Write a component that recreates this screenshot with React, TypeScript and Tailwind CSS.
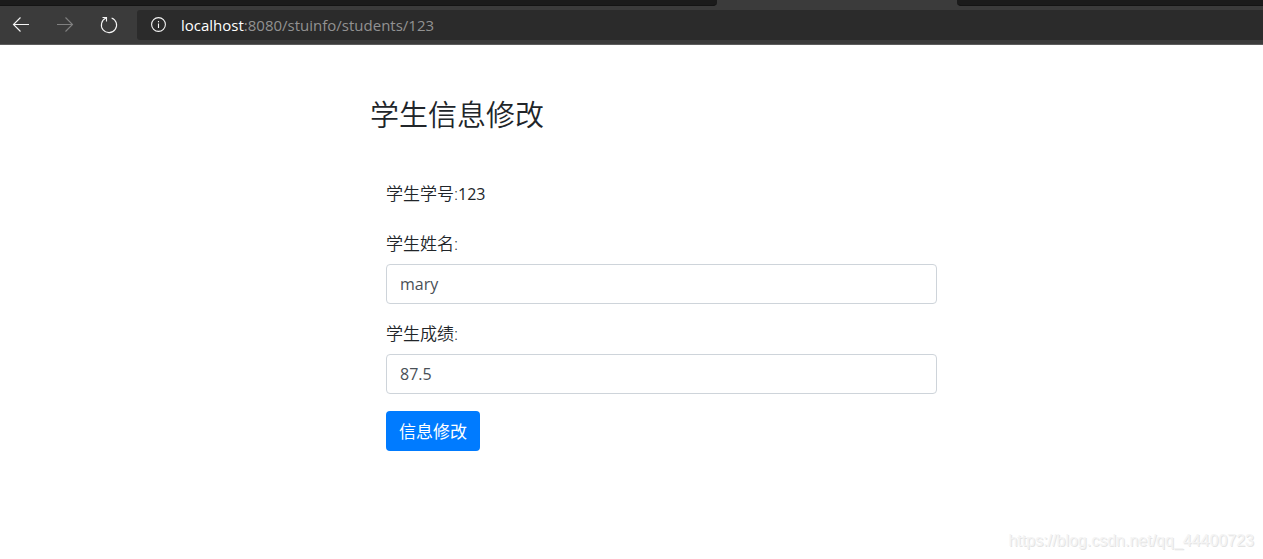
import { useState } from "react";

function BrowserBar() {
  return (
    <header className="bg-[#3b3b3b]">
      <div className="flex h-[6px]" aria-hidden="true">
        <div className="w-[717px] rounded-br-[4px] border-b border-[#141414] bg-[#1b1b1b]" />
        <div className="w-[240px]" />
        <div className="flex-1 rounded-bl-[4px] border-b border-[#141414] bg-[#1b1b1b]" />
      </div>
      <nav className="flex h-[39px] items-center border-b border-[#5c5c5c] pl-[10px]">
        <button type="button" aria-label="Back" className="flex size-[22px] items-center justify-center">
          <svg width="22" height="22" viewBox="0 0 22 22" fill="none" stroke="#f5f5f5" strokeWidth="1.1">
            <path d="M19 10.5H3.5M10.5 3.5l-7 7 7 7" />
          </svg>
        </button>
        <button type="button" aria-label="Forward" disabled className="ml-[22px] flex size-[22px] items-center justify-center">
          <svg width="22" height="22" viewBox="0 0 22 22" fill="none" stroke="#808080" strokeWidth="1.1">
            <path d="M3 10.5h15.5M11.5 3.5l7 7-7 7" />
          </svg>
        </button>
        <button type="button" aria-label="Refresh" className="ml-[22px] flex size-[22px] items-center justify-center">
          <svg width="22" height="22" viewBox="0 0 22 22" fill="none" stroke="#f5f5f5" strokeWidth="1.1">
            <path d="M13.6 3.9A7.6 7.6 0 1 1 7.9 4.1M4.5 3.5h4v4" />
          </svg>
        </button>
        <div className="ml-[17px] flex h-[30px] flex-1 items-center rounded-l-[3px] bg-[#2b2b2b]">
          <button type="button" aria-label="Site information" className="ml-[13px] flex size-[16px] items-center justify-center">
            <svg width="16" height="16" viewBox="0 0 16 16" fill="none" stroke="#f5f5f5" strokeWidth="1.1">
              <circle cx="8.5" cy="7.5" r="6.9" />
              <path d="M8.5 6.5V11M8.5 4v1.2" />
            </svg>
          </button>
          <div
            role="textbox"
            aria-label="Address"
            contentEditable
            suppressContentEditableWarning
            spellCheck={false}
            className="ml-[15px] flex-1 text-[15px] leading-[30px] text-[#929292] outline-none"
          >
            <span className="text-white">localhost</span>:8080/stuinfo/students/123
          </div>
        </div>
      </nav>
    </header>
  );
}

type FieldProps = {
  id: string;
  label: string;
  value: string;
  onChange: (value: string) => void;
};

function Field({ id, label, value, onChange }: FieldProps) {
  return (
    <div className="mb-[17px]">
      <label htmlFor={id} className="mb-[8px] block">
        {label}
      </label>
      <input
        id={id}
        value={value}
        onChange={(e) => onChange(e.target.value)}
        className="block h-[40px] w-full rounded-[4px] border border-[#ced4da] bg-white px-[13px] text-[16px] font-normal text-[#495057] outline-none focus:border-[#80bdff]"
      />
    </div>
  );
}

export default function App() {
  const [name, setName] = useState("mary");
  const [score, setScore] = useState("87.5");

  return (
    <div className="flex min-h-screen flex-col bg-white font-['Open_Sans','Noto_Sans_CJK_SC',sans-serif] text-[#212529]">
      <BrowserBar />
      <main className="mx-auto w-full max-w-[643px] flex-1 pt-[52px] pl-[60px] font-[350]">
        <h1 className="text-[29px] leading-[35px] font-[350]">学生信息修改</h1>
        <form className="px-[16px] pt-[49px] text-[17px] leading-[25px]" onSubmit={(e) => e.preventDefault()}>
          <p className="mb-[25px]">
            学生学号:<span className="text-[16px] leading-none font-normal">123</span>
          </p>
          <Field id="name" label="学生姓名:" value={name} onChange={setName} />
          <Field id="score" label="学生成绩:" value={score} onChange={setScore} />
          <button type="submit" className="h-[40px] rounded-[4px] bg-[#007bff] px-[13px] font-normal text-white">
            信息修改
          </button>
        </form>
      </main>
      <footer className="pr-[9px] pb-[7px] text-right font-['Liberation_Sans',sans-serif] text-[16px] leading-[22px] text-[#f4f4f4] [text-shadow:1px_1px_0_#e4e4e4]">
        https://blog.csdn.net/qq_44400723
      </footer>
    </div>
  );
}
